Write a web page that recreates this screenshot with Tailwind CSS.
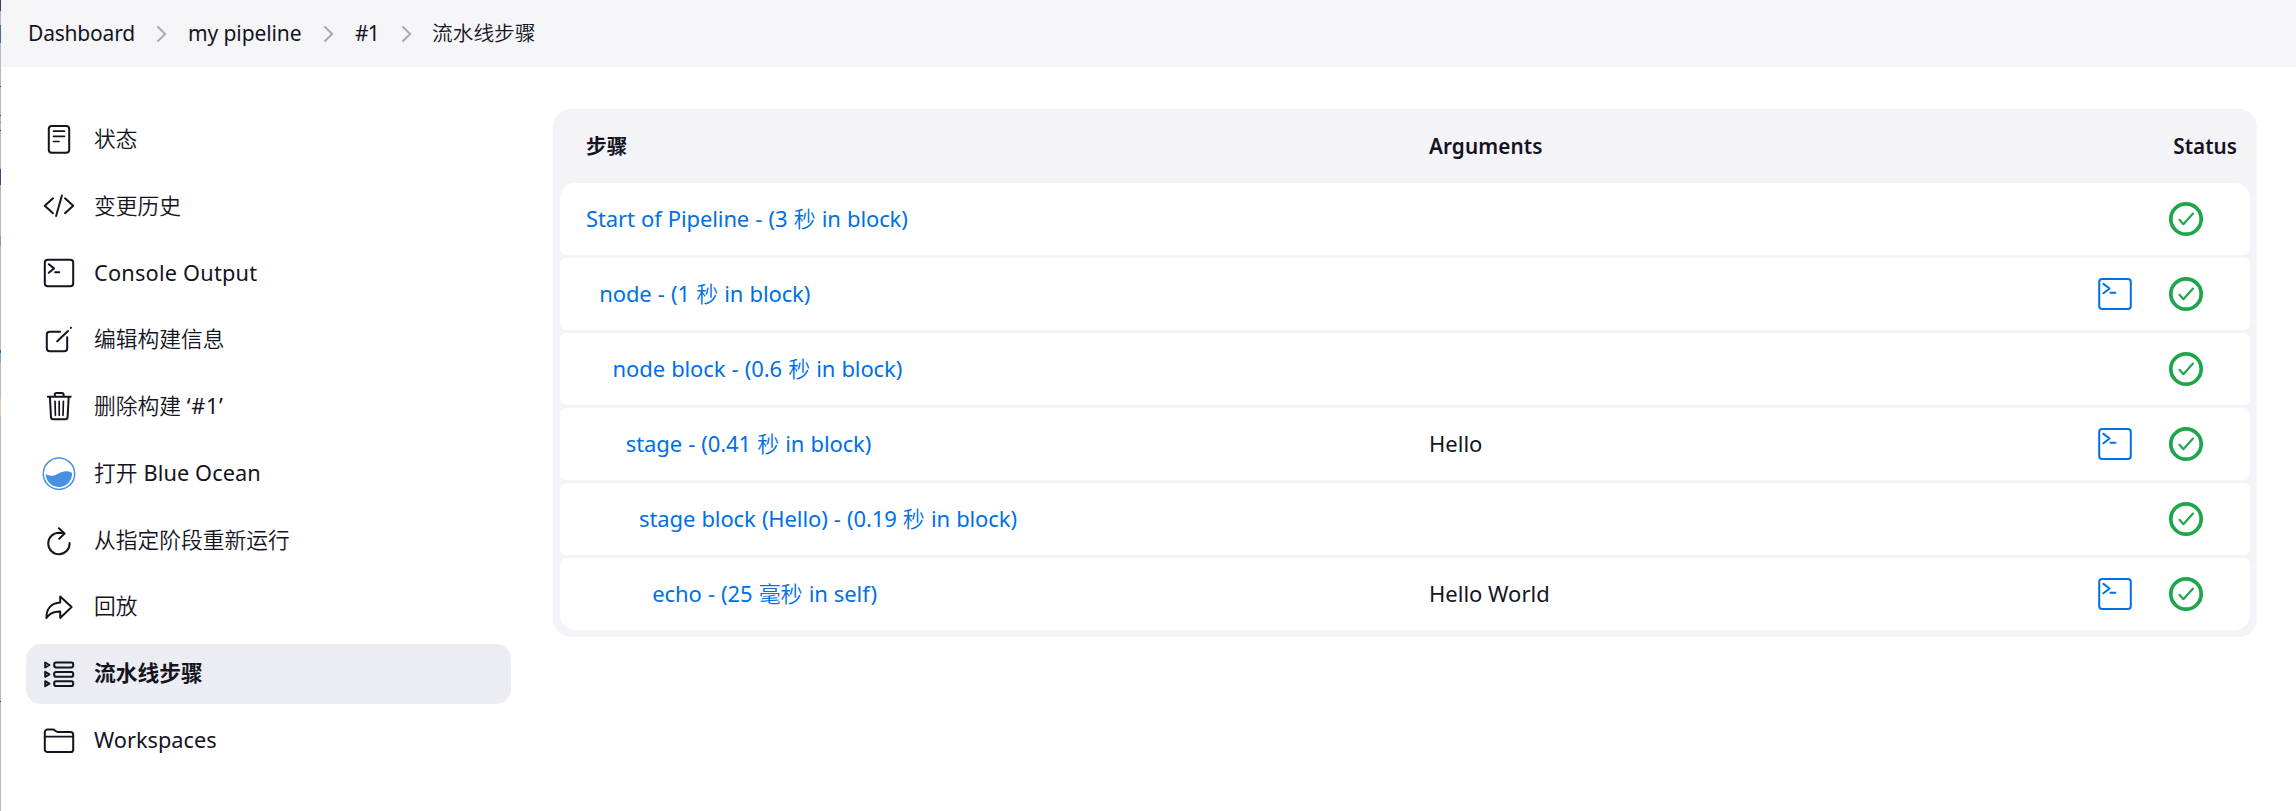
<!DOCTYPE html>
<html lang="zh-CN">
<head>
<meta charset="utf-8">
<title>流水线步骤</title>
<script src="https://cdn.jsdelivr.net/npm/@tailwindcss/browser@4"></script>
</head>
<body class="flex h-[811px] overflow-hidden bg-white font-['Noto_Sans','Noto_Sans_CJK_SC',sans-serif] text-[#14141f]">
<svg width="0" height="0" class="hidden">
  <symbol id="ok" viewBox="0 0 36 36"><circle cx="18" cy="18" r="15.2" stroke-width="3.7"/><path d="M11.5 18.8 15.4 23.2 25 12.5" stroke-width="2.1"/></symbol>
  <symbol id="term" viewBox="0 0 36 36"><rect x="2.2" y="3.1" width="31.6" height="29.8" rx="3"/><path d="M6.4 7.9 12.6 12.5 6.4 17.3M13.4 16.8H18.4"/></symbol>
</svg>
<div class="w-px shrink-0 bg-[linear-gradient(#403b80_0_11px,#b9b9b9_11px_25px,#416fa5_25px_43px,#b9b9b9_43px_86px,#444_86px_87px,#b9b9b9_87px_115px,#444_115px_116px,#b9b9b9_116px_122px,#4a9cc0_122px_123px,#b9b9b9_123px_130px,#444_130px_131px,#b9b9b9_131px_169px,#444083_169px_185px,#b9b9b9_185px_236px,#6d9fc8_236px_246px,#b9b9b9_246px_350px,#445a80_350px_353px,#76a9cc_353px_362px,#b9b9b9_362px_399px,#d8cfa8_399px_416px,#b9b9b9_416px_701px,#445_701px_702px,#b9b9b9_702px)]"></div>
<div class="flex min-w-0 flex-1 flex-col">
  <nav class="flex h-[67px] shrink-0 items-center bg-[#f5f5f8] pl-[27px] text-[21px] leading-none">
    <span class="w-[128px] tracking-[-0.2px]">Dashboard</span>
    <svg class="mr-[21px] h-4 w-[11px] text-[#a9a8bd]" viewBox="0 0 11 16" fill="none" stroke="currentColor" stroke-width="2" stroke-linecap="round" stroke-linejoin="round"><path d="M2 1 9.2 8 2 15"/></svg>
    <span class="w-[135px] tracking-[-0.1px]">my pipeline</span>
    <svg class="mr-[21px] h-4 w-[11px] text-[#a9a8bd]" viewBox="0 0 11 16" fill="none" stroke="currentColor" stroke-width="2" stroke-linecap="round" stroke-linejoin="round"><path d="M2 1 9.2 8 2 15"/></svg>
    <span class="w-[46px] tracking-[-0.8px]">#1</span>
    <svg class="mr-5 h-4 w-[11px] text-[#a9a8bd]" viewBox="0 0 11 16" fill="none" stroke="currentColor" stroke-width="2" stroke-linecap="round" stroke-linejoin="round"><path d="M2 1 9.2 8 2 15"/></svg>
    <span class="font-[350] text-[20.7px]">流水线步骤</span>
  </nav>
  <div class="flex flex-1">
    <aside class="flex w-[485px] shrink-0 flex-col gap-[6.75px] pt-[43px] text-[21.75px] leading-none ml-[25px] [&>a]:flex [&>a]:h-[60px] [&>a]:shrink-0 [&>a]:items-center [&>a]:gap-[17px] [&>a]:rounded-[15px] [&>a]:pl-[15px] [&>a>span]:pb-[2px] [&_svg]:size-9 [&_svg]:fill-none [&_svg]:stroke-current [&_svg]:stroke-2 [&_svg]:[stroke-linecap:round] [&_svg]:[stroke-linejoin:round]">
      <a><svg viewBox="0 0 36 36"><rect x="7.8" y="4" width="20.4" height="26.7" rx="3"/><path d="M12.5 9.2H23.5M12.5 14.3H23.5M12.5 19.5H18" stroke-width="1.7"/></svg><span class="font-[350]">状态</span></a>
      <a><svg viewBox="0 0 36 36"><path d="M12 9.3 3.8 16.7 12 24.2M24 9.3 32.2 16.7 24 24.2M20.9 6.4 15.1 27"/></svg><span class="font-[350]">变更历史</span></a>
      <a><svg viewBox="0 0 36 36"><rect x="3.8" y="3.8" width="28.4" height="26.4" rx="3"/><path d="M7.8 8.2 13 12.4 7.8 16.8M14.2 16.2H18.2"/></svg><span class="tracking-[0.2px]">Console Output</span></a>
      <a><svg viewBox="0 0 36 36"><path d="M19 9.7H8.8a3 3 0 0 0-3 3V26.2a3 3 0 0 0 3 3H23.2a3 3 0 0 0 3-3V15.2M16.2 19.2 27 9M29.8 5.9l.2-.2"/></svg><span class="font-[350]">编辑构建信息</span></a>
      <a><svg viewBox="0 0 36 36"><path d="M6.8 7.8H29.7M8.9 8 10 28a2.4 2.4 0 0 0 2.4 2.3H24.2A2.4 2.4 0 0 0 26.6 28L27.7 8M13.8 7.5V5.6a1.6 1.6 0 0 1 1.6-1.6H21a1.6 1.6 0 0 1 1.6 1.6V7.5"/><path d="M14 12.3 14.4 26.3M18.2 12.3V26.3M22.4 12.3 22 26.3" stroke-width="1.7"/></svg><span><span class="font-[350]">删除构建</span> <span class="tracking-[0.7px]">‘#1’</span></span></a>
      <a><svg viewBox="0 0 36 36"><circle cx="18" cy="17.7" r="15.7" stroke="#4a90e2" stroke-width="1.5"/><path d="M4.7 18.1C8 20.5 12.5 20.2 16 18.2C21 15 27 14 31.1 16.8C31.3 25 25.5 31 18 31C10.5 31 4.7 25.3 4.7 18.1Z" fill="#4a90e2" stroke="none"/></svg><span class="tracking-[0.1px]"><span class="font-[350]">打开</span> Blue Ocean</span></a>
      <a><svg viewBox="0 0 36 36"><path d="M28.6 20A10.7 10.7 0 1 1 17.9 9.8L23.2 10.6M17.8 5.2 23.6 10.6 18.2 15.8"/></svg><span class="font-[350]">从指定阶段重新运行</span></a>
      <a><svg viewBox="0 0 36 36"><path d="M19.2 7.6 30.6 18.1 19.2 28.9V22.4C13 22.2 8.5 24 5.4 28.9C5.3 19.5 10.5 14.2 19.2 13.6Z"/></svg><span class="font-[350]">回放</span></a>
      <a class="bg-[#ecedf2] font-bold"><svg viewBox="0 0 36 36"><path d="M4.2 6.5 8.4 9 4.2 11.5ZM4.2 15.8 8.4 18.3 4.2 20.8ZM4.2 25.2 8.4 27.7 4.2 30.2Z"/><rect x="13.2" y="6.6" width="19" height="4.8" rx="1.8"/><rect x="13.2" y="15.9" width="19" height="4.8" rx="1.8"/><rect x="13.2" y="25.3" width="19" height="4.8" rx="1.8"/></svg><span>流水线步骤</span></a>
      <a><svg viewBox="0 0 36 36"><path d="M3.8 26.4V9.2a2.6 2.6 0 0 1 2.6-2.6H12C14 6.6 14.5 8.9 17 8.9H29.4a2.8 2.8 0 0 1 2.8 2.8V26.4a2.6 2.6 0 0 1-2.6 2.6H6.4a2.6 2.6 0 0 1-2.6-2.6Z"/><path d="M4 13.6H32" stroke-width="1.7"/></svg><span>Workspaces</span></a>
    </aside>
    <main class="ml-[42px] mt-[42px] flex h-[528px] w-[1704px] flex-col rounded-[18px] bg-[#f3f3f8] px-[7px] text-[22px] leading-none">
      <div class="flex h-[74px] items-center pl-[26px] pr-[13px] text-[20.7px] font-semibold">
        <span class="w-[843px] font-bold">步骤</span><span class="flex-1 tracking-[0.1px]">Arguments</span><span>Status</span>
      </div>
      <div class="flex flex-col gap-[3px] [&>div]:flex [&>div]:h-[72px] [&>div]:items-center [&>div]:rounded-[6px] [&>div]:bg-white [&>div]:pl-[26px] [&>div]:pr-[46px] [&>div>a]:w-[843px] [&>div>a]:pb-[3px] [&>div>a]:tracking-[-0.12px] [&>div>a]:[word-spacing:0.6px] [&>div>a]:text-[#0070e6] [&>div>p]:flex-1 [&>div>p]:pb-[3px] [&_svg]:size-9 [&_svg]:fill-none [&_svg]:[stroke-linecap:round] [&_svg]:[stroke-linejoin:round]">
        <div class="rounded-t-[15px]!"><a>Start of Pipeline - (3 <span class="font-[350]">秒</span> in block)</a><p></p><svg class="text-[#1ea64b]" stroke="currentColor"><use href="#ok"/></svg></div>
        <div><a class="pl-[13.3px]">node - (1 <span class="font-[350]">秒</span> in block)</a><p></p><svg class="mr-[35px] text-[#0070e6]" stroke="currentColor" stroke-width="2"><use href="#term"/></svg><svg class="text-[#1ea64b]" stroke="currentColor"><use href="#ok"/></svg></div>
        <div><a class="pl-[26.6px]">node block - (0.6 <span class="font-[350]">秒</span> in block)</a><p></p><svg class="text-[#1ea64b]" stroke="currentColor"><use href="#ok"/></svg></div>
        <div><a class="pl-[39.8px]">stage - (0.41 <span class="font-[350]">秒</span> in block)</a><p>Hello</p><svg class="mr-[35px] text-[#0070e6]" stroke="currentColor" stroke-width="2"><use href="#term"/></svg><svg class="text-[#1ea64b]" stroke="currentColor"><use href="#ok"/></svg></div>
        <div><a class="pl-[53.1px]">stage block (Hello) - (0.19 <span class="font-[350]">秒</span> in block)</a><p></p><svg class="text-[#1ea64b]" stroke="currentColor"><use href="#ok"/></svg></div>
        <div class="rounded-b-[15px]!"><a class="pl-[66.3px]">echo - (25 <span class="font-[350]">毫秒</span> in self)</a><p>Hello World</p><svg class="mr-[35px] text-[#0070e6]" stroke="currentColor" stroke-width="2"><use href="#term"/></svg><svg class="text-[#1ea64b]" stroke="currentColor"><use href="#ok"/></svg></div>
      </div>
    </main>
  </div>
</div>
</body>
</html>
